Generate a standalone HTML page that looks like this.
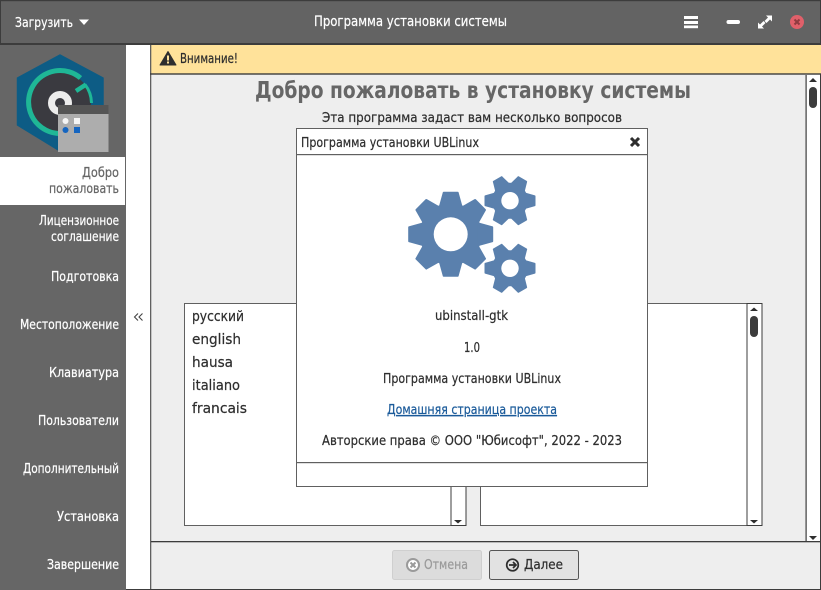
<!DOCTYPE html>
<html><head><meta charset="utf-8"><style>
html,body{margin:0;padding:0;width:821px;height:590px;overflow:hidden;background:#fff}
svg{display:block}
text{font-family:"DejaVu Sans","Liberation Sans",sans-serif;font-size:13px;stroke-width:.22px}
.w,.s text{fill:#fff;stroke:#fff}
.d{fill:#2e2e2e;stroke:#2e2e2e}
.g{fill:#666;stroke:#666}
</style></head><body>
<svg width="821" height="590" viewBox="0 0 821 590" xmlns="http://www.w3.org/2000/svg">
<defs>
<path id="t1" d="M-12 -27L-8 -41.5Q-8 -42.5 -7 -42.5H7Q8 -42.5 8 -41.5L12 -27Z"/>
<path id="t2" d="M-8.5 -14L-5.5 -24.5Q-5.5 -25.5 -4.5 -25.5H4.5Q5.5 -25.5 5.5 -24.5L8.5 -14Z"/>
</defs>
<rect width="821" height="590" fill="#fff"/>
<!-- content -->
<rect x="150" y="45" width="671" height="545" fill="#eeeeee"/>
<!-- titlebar -->
<rect x="0" y="0" width="821" height="45" fill="#636363"/>
<rect x="0" y="0" width="821" height="1.2" fill="#3c3c3c"/>
<rect x="0" y="43" width="821" height="2" fill="#3c3c3c"/>
<rect x="0" y="0" width="1" height="45" fill="#3c3c3c"/>
<rect x="820" y="0" width="1" height="590" fill="#3c3c3c"/>
<text class="w" x="15" y="27" textLength="58" lengthAdjust="spacingAndGlyphs">Загрузить</text>
<path d="M79 19.5h10l-5 5.5z" fill="#fff"/>
<text class="w" x="314" y="26" textLength="193" lengthAdjust="spacingAndGlyphs" style="font-size:14px">Программа установки системы</text>
<g fill="#fff"><rect x="684" y="16" width="14" height="3"/><rect x="684" y="21" width="14" height="3"/><rect x="684" y="25.5" width="14" height="2.7"/>
<rect x="726.5" y="20" width="13.5" height="4" rx="2"/>
<path d="M758 28.5v-6l2 2 3.5-3.5 2 2-3.5 3.5 2 2zM772 15.5v6l-2-2-3.5 3.5-2-2 3.5-3.5-2-2z"/></g>
<circle cx="797" cy="22" r="7" fill="#e0606a"/>
<path d="M794.5 19.5l5 5M799.5 19.5l-5 5" stroke="#8f3a40" stroke-width="2"/>
<!-- sidebar -->
<rect x="0" y="45" width="126" height="545" fill="#666666"/>
<rect x="0" y="157" width="125" height="48" fill="#fff"/>
<rect x="126" y="45" width="24" height="544" fill="#fff"/>
<rect x="150" y="45" width="1.3" height="545" fill="#606060"/>
<rect x="126" y="589" width="695" height="1" fill="#3c3c3c"/>
<!-- logo -->
<path d="M60 55L103 78v47L60 151 17.5 125V78z" fill="#0d5c85" stroke="#0d5c85" stroke-width="1.5" stroke-linejoin="round"/>
<circle cx="60" cy="103" r="31" fill="#3a3a40"/>
<path d="M80.5 78A31.5 31.5 0 1 0 91 108" fill="none" stroke="#1fb796" stroke-width="5"/>
<path d="M76 91l10-6.5" stroke="#1fb796" stroke-width="4.5" fill="none"/>
<path d="M85 84.5A31 31 0 0 1 91.5 103" fill="none" stroke="#1fb796" stroke-width="3"/>
<circle cx="60" cy="103" r="8.5" fill="none" stroke="#ececec" stroke-width="7"/>
<rect x="58" y="105" width="50.5" height="47" fill="#adadad"/>
<rect x="58" y="105" width="50.5" height="9" fill="#555"/>
<circle cx="65.5" cy="121" r="3" fill="#f5f5f5"/><rect x="74" y="118" width="6" height="6" fill="#f5f5f5"/>
<circle cx="65.5" cy="130" r="3" fill="#1565c0"/><rect x="74" y="127" width="6" height="6" fill="#1565c0"/>
<!-- sidebar text -->
<text class="g" x="82" y="177" textLength="37" lengthAdjust="spacingAndGlyphs">Добро</text>
<text class="g" x="49" y="193" textLength="70" lengthAdjust="spacingAndGlyphs">пожаловать</text>
<g class="s">
<text x="39" y="225" textLength="80" lengthAdjust="spacingAndGlyphs">Лицензионное</text>
<text x="51" y="241" textLength="68" lengthAdjust="spacingAndGlyphs">соглашение</text>
<text x="51" y="281" textLength="68" lengthAdjust="spacingAndGlyphs">Подготовка</text>
<text x="20" y="329" textLength="99" lengthAdjust="spacingAndGlyphs">Местоположение</text>
<text x="49" y="377" textLength="70" lengthAdjust="spacingAndGlyphs">Клавиатура</text>
<text x="38" y="425" textLength="81" lengthAdjust="spacingAndGlyphs">Пользователи</text>
<text x="23" y="473" textLength="96" lengthAdjust="spacingAndGlyphs">Дополнительный</text>
<text x="57" y="521" textLength="62" lengthAdjust="spacingAndGlyphs">Установка</text>
<text x="47" y="569" textLength="72" lengthAdjust="spacingAndGlyphs">Завершение</text>
</g>
<path d="M138 313.5l-3.5 3.5 3.5 3.5M142.5 313.5l-3.5 3.5 3.5 3.5" fill="none" stroke="#444" stroke-width="1.1"/>
<!-- warning -->
<rect x="150" y="45" width="671" height="28.5" fill="#ffe29a"/>
<rect x="150" y="45" width="1.3" height="29" fill="#606060"/>
<rect x="150" y="73.3" width="671" height="1.4" fill="#3c3c3c"/>
<path d="M168 51.5l8 13.5h-16z" fill="#2e2e2e" stroke="#2e2e2e" stroke-linejoin="round"/>
<rect x="167" y="55.5" width="2" height="5" fill="#ffe29a"/><rect x="167" y="61.5" width="2" height="2" fill="#ffe29a"/>
<text class="d" x="180" y="63" textLength="58" lengthAdjust="spacingAndGlyphs">Внимание!</text>
<!-- heading -->
<text class="g" x="255" y="98" textLength="436" lengthAdjust="spacingAndGlyphs" style="font-size:23px;font-weight:bold;stroke-width:0">Добро пожаловать в установку системы</text>
<text class="d" x="322" y="122" textLength="300" lengthAdjust="spacingAndGlyphs">Эта программа задаст вам несколько вопросов</text>
<!-- main scrollbar -->
<rect x="806" y="75" width="14" height="466" fill="#fff"/>
<rect x="805.5" y="75" width="1.2" height="466" fill="#3c3c3c"/>
<path d="M809 82l4-4 4 4z" fill="#2e2e2e"/>
<rect x="809" y="87" width="8" height="21" rx="4" fill="#3c3c3c"/>
<path d="M809 536h8l-4 4z" fill="#2e2e2e"/>
<!-- footer -->
<rect x="151" y="541" width="670" height="1.3" fill="#3c3c3c"/>
<rect x="392.5" y="550.5" width="89" height="29" rx="2" fill="#dcdcdc" stroke="#cfcfcf"/>
<rect x="489.5" y="550.5" width="89" height="29" rx="2" fill="#e2e2e2" stroke="#555"/>
<circle cx="413" cy="565" r="6" fill="#fff" stroke="#9a9a9a" stroke-width="2"/>
<path d="M410.5 562.5l5 5M415.5 562.5l-5 5" stroke="#9a9a9a" stroke-width="2"/>
<text x="424" y="569" textLength="44" lengthAdjust="spacingAndGlyphs" fill="#9a9a9a" stroke="#9a9a9a">Отмена</text>
<circle cx="512.5" cy="565" r="5.8" fill="none" stroke="#2e2e2e" stroke-width="1.7"/>
<path d="M509 565h6M513 562l3 3-3 3" fill="none" stroke="#2e2e2e" stroke-width="1.7"/>
<text class="d" x="524" y="569" textLength="39" lengthAdjust="spacingAndGlyphs">Далее</text>
<!-- lists -->
<rect x="184.5" y="303.5" width="267" height="222" fill="#fff" stroke="#606060"/>
<rect x="451" y="303.5" width="15" height="222" fill="#fff" stroke="#3c3c3c"/>
<path d="M454 520h8l-4 3.5z" fill="#2e2e2e"/>
<rect x="480.5" y="303.5" width="267" height="222" fill="#fff" stroke="#606060"/>
<rect x="747" y="303.5" width="15" height="222" fill="#fff" stroke="#3c3c3c"/>
<path d="M750 311l4-3.5 4 3.5z" fill="#2e2e2e"/>
<rect x="750" y="316" width="8" height="21" rx="4" fill="#3c3c3c"/>
<path d="M750 520h8l-4 3.5z" fill="#2e2e2e"/>
<text class="d" x="192" y="321" textLength="52" lengthAdjust="spacingAndGlyphs" style="font-size:14px">русский</text>
<text class="d" x="192" y="344" textLength="49" lengthAdjust="spacingAndGlyphs" style="font-size:14px">english</text>
<text class="d" x="192" y="367" textLength="41" lengthAdjust="spacingAndGlyphs" style="font-size:14px">hausa</text>
<text class="d" x="192" y="390" textLength="48" lengthAdjust="spacingAndGlyphs" style="font-size:14px">italiano</text>
<text class="d" x="192" y="413" textLength="55" lengthAdjust="spacingAndGlyphs" style="font-size:14px">francais</text>
<!-- dialog -->
<rect x="296.5" y="128.5" width="351" height="358" fill="#fff" stroke="#606060"/>
<rect x="297" y="154" width="350" height="1.2" fill="#606060"/>
<rect x="297" y="462" width="350" height="1.2" fill="#606060"/>
<text class="d" x="301" y="147" textLength="178" lengthAdjust="spacingAndGlyphs">Программа установки UBLinux</text>
<path d="M631 138l8 8M639 138l-8 8" stroke="#2e2e2e" stroke-width="3"/>
<!-- gears -->
<g fill="#5a80ad">
<g transform="translate(450.7 234.3)">
<circle r="31"/>
<use href="#t1"/><use href="#t1" transform="rotate(45)"/><use href="#t1" transform="rotate(90)"/><use href="#t1" transform="rotate(135)"/><use href="#t1" transform="rotate(180)"/><use href="#t1" transform="rotate(225)"/><use href="#t1" transform="rotate(270)"/><use href="#t1" transform="rotate(315)"/>
<circle r="17" fill="#fff"/>
</g>
<g transform="translate(510 200.7)">
<circle r="18"/>
<use href="#t2" transform="rotate(30)"/><use href="#t2" transform="rotate(90)"/><use href="#t2" transform="rotate(150)"/><use href="#t2" transform="rotate(210)"/><use href="#t2" transform="rotate(270)"/><use href="#t2" transform="rotate(330)"/>
<circle r="8.7" fill="#fff"/>
</g>
<g transform="translate(510 268.3)">
<circle r="18"/>
<use href="#t2" transform="rotate(30)"/><use href="#t2" transform="rotate(90)"/><use href="#t2" transform="rotate(150)"/><use href="#t2" transform="rotate(210)"/><use href="#t2" transform="rotate(270)"/><use href="#t2" transform="rotate(330)"/>
<circle r="8.7" fill="#fff"/>
</g>
</g>
<text class="d" x="435" y="320" textLength="73" lengthAdjust="spacingAndGlyphs">ubinstall-gtk</text>
<text class="d" x="464" y="352" textLength="16" lengthAdjust="spacingAndGlyphs">1.0</text>
<text class="d" x="383" y="383" textLength="178" lengthAdjust="spacingAndGlyphs">Программа установки UBLinux</text>
<text x="387" y="414" textLength="170" lengthAdjust="spacingAndGlyphs" fill="#1a5a9a" stroke="#1a5a9a" text-decoration="underline">Домашняя страница проекта</text>
<text class="d" x="322" y="445" textLength="300" lengthAdjust="spacingAndGlyphs">Авторские права © ООО "Юбисофт", 2022 - 2023</text>
</svg>
</body></html>
